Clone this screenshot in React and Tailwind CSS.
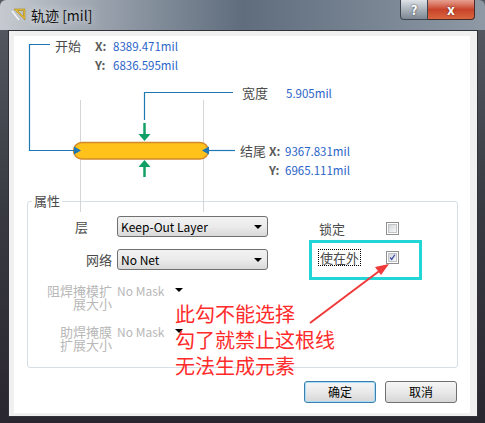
import React from 'react'

function Select({ label, width = 'w-[151px]' }) {
  return (
    <div className={`relative h-[21px] ${width} rounded-[3px] border border-[#707070] bg-gradient-to-b from-[#f2f2f2] via-[#ebebeb] to-[#d9d9d9] flex items-center pl-[3px] text-[12px] text-black`}>
      <span>{label}</span>
      <span className="absolute right-[5px] top-[8px] w-0 h-0 border-l-[4px] border-r-[4px] border-t-[4px] border-l-transparent border-r-transparent border-t-black" />
    </div>
  )
}

function Checkbox({ checked }) {
  return (
    <div className="w-[13px] h-[13px] border border-[#8e8f8f] bg-white p-[1px]">
      <div className="w-full h-full border border-[#c0c4c8] bg-gradient-to-br from-[#d4d6d8] to-[#f8f8f8] flex items-center justify-center">
        {checked && (
          <svg width="9" height="9" viewBox="0 0 9 9">
            <path d="M1.5 4.5 L3.5 7 L7.5 1" fill="none" stroke="#3b4fa8" strokeWidth="1.6" />
          </svg>
        )}
      </div>
    </div>
  )
}

function Button({ children, primary }) {
  return (
    <button
      className={`w-[72px] h-[22px] rounded-[3px] border text-[12px] text-black bg-gradient-to-b from-[#f6f6f6] via-[#e9e9e9] to-[#d6d6d6] ${
        primary ? 'border-[#3c7fb1] shadow-[inset_0_0_0_1px_#a8dcf4]' : 'border-[#707070]'
      }`}
    >
      {children}
    </button>
  )
}

export default function App() {
  return (
    <div className="w-[485px] h-[423px] bg-gradient-to-b from-[#575b63] via-[#383a41] to-[#2a2630] flex flex-col font-['Noto_Sans_CJK_SC',sans-serif] overflow-hidden">
      <div className="h-[30px] shrink-0 flex items-start rounded-t-[6px] bg-gradient-to-r from-[#c6cad0] via-[#5f6d7d] to-[#8e99a5]">
        <svg className="mt-[8px] ml-[11px]" width="15" height="14" viewBox="0 0 15 14">
          <path d="M3 1 L14 1 L14 12 Z M6.5 2.5 L12.5 2.5 L12.5 8.5 Z" fill="#e8c23a" fillRule="evenodd" stroke="#a9851a" strokeWidth="0.6" />
          <path d="M1 3 L8 12" stroke="#f4f4f4" strokeWidth="1.6" />
        </svg>
        <span className="ml-[5px] mt-[5px] text-[14px] leading-[20px] text-[#111] [text-shadow:0_0_8px_rgba(255,255,255,0.9)]">轨迹 [mil]</span>
        <div className="ml-auto mr-[10px] flex">
          <div className="w-[28px] h-[20px] rounded-bl-[4px] border border-t-0 border-[#3d4650] bg-gradient-to-b from-[#dfe3e8] via-[#aab2bb] to-[#7d8792] flex items-center justify-center text-white font-bold text-[13px] [text-shadow:0_0_2px_#333]">?</div>
          <div className="w-[47px] h-[20px] rounded-br-[4px] border border-t-0 border-l-0 border-[#4a2a26] bg-gradient-to-b from-[#e6a091] via-[#c8432a] to-[#d9663f] flex items-center justify-center text-white font-bold text-[14px] [text-shadow:0_0_2px_#4a1a10]">x</div>
        </div>
      </div>

      <div className="ml-[8px] mr-[7px] mb-[6px] flex-1 border border-[#2f3338] bg-[#f0f0f0] pt-[5px] pl-[5px] pr-[7px] pb-[3px]">
        <div className="relative h-full bg-white">
          <div className="relative h-[165px]">
            <svg className="absolute left-0 top-0 z-10 overflow-visible" width="456" height="180" viewBox="0 0 456 180">
              <line x1="66.5" y1="64" x2="66.5" y2="176" stroke="#d6d6d6" strokeWidth="1" />
              <line x1="189.5" y1="64" x2="189.5" y2="176" stroke="#d6d6d6" strokeWidth="1" />
              <rect x="59.5" y="106.5" width="135" height="16.5" rx="8.25" fill="#fec21a" stroke="#d2892c" strokeWidth="1.5" />
              <polyline points="36,8.5 15.5,8.5 15.5,114.5 62,114.5" fill="none" stroke="#1d78b4" strokeWidth="1.2" />
              <polygon points="67,114.5 60,110.5 60,118.5" fill="#1d78b4" />
              <polyline points="221,114.5 193,114.5" fill="none" stroke="#1d78b4" strokeWidth="1.2" />
              <polygon points="188,114.5 195,110.5 195,118.5" fill="#1d78b4" />
              <polyline points="219,56.5 130.5,56.5 130.5,84" fill="none" stroke="#1d78b4" strokeWidth="1.2" />
              <line x1="130.5" y1="87" x2="130.5" y2="99" stroke="#10a066" strokeWidth="2.5" />
              <polygon points="130.5,105 124.5,98 136.5,98" fill="#10a066" />
              <line x1="130.5" y1="130" x2="130.5" y2="141" stroke="#10a066" strokeWidth="2.5" />
              <polygon points="130.5,124 124.5,131 136.5,131" fill="#10a066" />
            </svg>

            <span className="absolute left-[41px] top-[2px] text-[13px] leading-[16px] text-[#4a4a4a]">开始</span>
            <span className="absolute left-[81px] top-[2px] text-[12px] leading-[16px] font-bold text-[#5a5a5a]">X:</span>
            <span className="absolute left-[99px] top-[2px] text-[11.5px] leading-[16px] text-[#2a64c8]">8389.471mil</span>
            <span className="absolute left-[81px] top-[21px] text-[12px] leading-[16px] font-bold text-[#5a5a5a]">Y:</span>
            <span className="absolute left-[99px] top-[21px] text-[11.5px] leading-[16px] text-[#2a64c8]">6836.595mil</span>

            <span className="absolute left-[228px] top-[49px] text-[13px] leading-[16px] text-[#4a4a4a]">宽度</span>
            <span className="absolute left-[272px] top-[49px] text-[11.5px] leading-[16px] text-[#2a64c8]">5.905mil</span>

            <span className="absolute left-[226px] top-[107px] text-[13px] leading-[16px] text-[#4a4a4a]">结尾</span>
            <span className="absolute left-[255px] top-[107px] text-[12px] leading-[16px] font-bold text-[#5a5a5a]">X:</span>
            <span className="absolute left-[271px] top-[107px] text-[11.5px] leading-[16px] text-[#2a64c8]">9367.831mil</span>
            <span className="absolute left-[255px] top-[126px] text-[12px] leading-[16px] font-bold text-[#5a5a5a]">Y:</span>
            <span className="absolute left-[271px] top-[126px] text-[11.5px] leading-[16px] text-[#2a64c8]">6965.111mil</span>
          </div>

          <div className="relative ml-[13px] w-[431px] h-[167px] border border-[#d5dfe5] rounded-[3px] flex">
            <span className="absolute left-[4px] top-[-9px] bg-white px-[2px] text-[13px] leading-[16px] text-[#4a4a4a]">属性</span>

            <div className="flex flex-col pt-[14px]">
              <div className="flex items-center gap-[5px]">
                <span className="w-[84px] pr-[24px] text-right text-[13px] text-[#4a4a4a]">层</span>
                <Select label="Keep-Out Layer" />
              </div>
              <div className="flex items-center gap-[5px] mt-[12px]">
                <span className="w-[84px] text-right text-[13px] text-[#4a4a4a]">网络</span>
                <Select label="No Net" />
              </div>
              <div className="flex items-start gap-[5px] mt-[14px]">
                <span className="w-[84px] text-right text-[13px] leading-[13px] text-[#b8b8b8]">阻焊掩模扩<br />展大小</span>
                <span className="text-[12px] leading-[13px] text-[#b8b8b8]">No Mask</span>
                <span className="mt-[4px] ml-[6px] w-0 h-0 border-l-[4px] border-r-[4px] border-t-[4px] border-l-transparent border-r-transparent border-t-black" />
              </div>
              <div className="flex items-start gap-[5px] mt-[15px]">
                <span className="w-[84px] text-right text-[13px] leading-[13px] text-[#b8b8b8]">助焊掩膜<br />扩展大小</span>
                <span className="text-[12px] leading-[13px] text-[#b8b8b8]">No Mask</span>
                <span className="mt-[4px] ml-[6px] w-0 h-0 border-l-[4px] border-r-[4px] border-t-[4px] border-l-transparent border-r-transparent border-t-black" />
              </div>
            </div>

            <div className="flex flex-col ml-[51px] pt-[16px]">
              <div className="flex items-center h-[21px]">
                <span className="w-[67px] text-[13px] text-[#4a4a4a]">锁定</span>
                <Checkbox />
              </div>
              <div className="flex items-center h-[21px] mt-[8px]">
                <span className="w-[67px] flex">
                  <span className="border border-dotted border-black leading-[15px] px-[1px] -ml-[1px] text-[13px] text-[#4a4a4a]">使在外</span>
                </span>
                <Checkbox checked />
              </div>
            </div>

            <div className="absolute left-[281px] top-[38px] w-[113px] h-[40px] border-[3px] border-[#22d6d8]" />
          </div>

          <div className="flex justify-end gap-[9px] pr-[13px] mt-[13px]">
            <Button primary>确定</Button>
            <Button>取消</Button>
          </div>

          <div className="absolute left-[161px] top-[265px] text-[20px] leading-[26px] text-[#ff2b2b]">
            此勾不能选择<br />勾了就禁止这根线<br />无法生成元素
          </div>
          <svg className="absolute left-0 top-0 pointer-events-none" width="456" height="376" viewBox="0 0 456 376">
            <line x1="296" y1="287" x2="368" y2="233" stroke="#f03a3a" strokeWidth="2" />
            <polygon points="375,228 361,231 367,239" fill="#f03a3a" />
          </svg>
        </div>
      </div>
    </div>
  )
}
